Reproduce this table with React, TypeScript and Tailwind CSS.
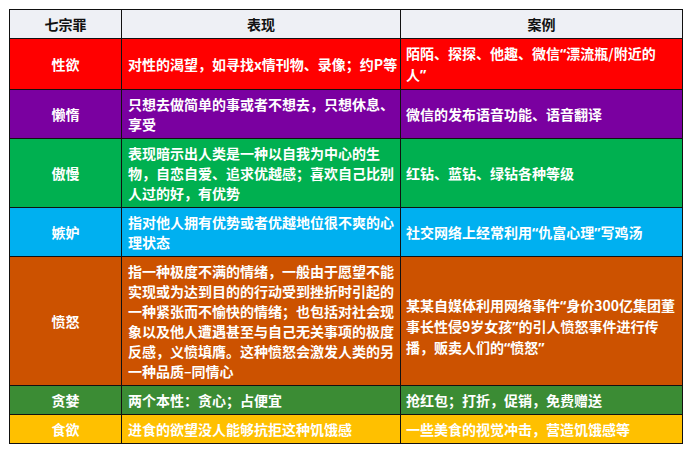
const rows = [
  {
    name: '性欲',
    bg: 'bg-[#ff0000]',
    desc: ['对性的渴望，如寻找x情刊物、录像；约P等'],
    cases: ['陌陌、探探、他趣、微信“漂流瓶/附近的', '人”'],
  },
  {
    name: '懒惰',
    bg: 'bg-[#7a00a0]',
    desc: ['只想去做简单的事或者不想去，只想休息、', '享受'],
    cases: ['微信的发布语音功能、语音翻译'],
  },
  {
    name: '傲慢',
    bg: 'bg-[#00b050]',
    desc: ['表现暗示出人类是一种以自我为中心的生', '物，自恋自爱、追求优越感；喜欢自己比别', '人过的好，有优势'],
    cases: ['红钻、蓝钻、绿钻各种等级'],
  },
  {
    name: '嫉妒',
    bg: 'bg-[#00b0f0]',
    desc: ['指对他人拥有优势或者优越地位很不爽的心', '理状态'],
    cases: ['社交网络上经常利用“仇富心理”写鸡汤'],
  },
  {
    name: '愤怒',
    bg: 'bg-[#cc5200]',
    desc: [
      '指一种极度不满的情绪，一般由于愿望不能',
      '实现或为达到目的的行动受到挫折时引起的',
      '一种紧张而不愉快的情绪；也包括对社会现',
      '象以及他人遭遇甚至与自己无关事项的极度',
      '反感，义愤填膺。这种愤怒会激发人类的另',
      '一种品质–同情心',
    ],
    cases: ['某某自媒体利用网络事件“身价300亿集团董', '事长性侵9岁女孩”的引人愤怒事件进行传', '播，贩卖人们的“愤怒”'],
    casePad: 'pt-[14px]',
  },
  {
    name: '贪婪',
    bg: 'bg-[#3b8c34]',
    desc: ['两个本性：贪心；占便宜'],
    cases: ['抢红包；打折，促销，免费赠送'],
  },
  {
    name: '食欲',
    bg: 'bg-[#ffc000]',
    desc: ['进食的欲望没人能够抗拒这种饥饿感'],
    cases: ['一些美食的视觉冲击，营造饥饿感等'],
  },
];

// curly quotes are narrow in the original, so render them in a latin face
function Line({ text }: { text: string }) {
  const parts = text.split(/([“”])/);
  return (
    <div className="whitespace-nowrap">
      {parts.map((p, i) =>
        p === '“' || p === '”' ? (
          <span key={i} className="font-['Noto_Sans']">
            {p}
          </span>
        ) : (
          <span key={i}>{p}</span>
        ),
      )}
    </div>
  );
}

function Lines({ lines }: { lines: string[] }) {
  return (
    <>
      {lines.map((l, i) => (
        <Line key={i} text={l} />
      ))}
    </>
  );
}

export default function App() {
  return (
    <div
      className="w-[691px] h-[452px] bg-white pl-[9px] pt-[9px]"
      style={{ fontFamily: '"Noto Sans CJK SC", "Noto Sans", sans-serif' }}
    >
      <table className="w-[673px] table-fixed border-collapse border border-[#111] text-[14px] leading-[20px] font-bold">
        <colgroup>
          <col className="w-[112px]" />
          <col className="w-[279px]" />
          <col className="w-[282px]" />
        </colgroup>
        <thead>
          <tr className="bg-[#eef0f5] text-[#111]">
            <th className="border border-[#111] py-[4px] text-center">七宗罪</th>
            <th className="border border-[#111] py-[4px] text-center">表现</th>
            <th className="border border-[#111] py-[4px] text-center">案例</th>
          </tr>
        </thead>
        <tbody>
          {rows.map((r) => (
            <tr key={r.name} className={`${r.bg} text-white`}>
              <td className="border border-[#111] py-[4px] text-center align-middle">{r.name}</td>
              <td className="border border-[#111] py-[4px] px-[6px] align-middle overflow-hidden">
                <Lines lines={r.desc} />
              </td>
              <td className={`border border-[#111] py-[4px] px-[5px] align-middle overflow-hidden ${r.casePad ?? ''}`}>
                <Lines lines={r.cases} />
              </td>
            </tr>
          ))}
        </tbody>
      </table>
    </div>
  );
}
